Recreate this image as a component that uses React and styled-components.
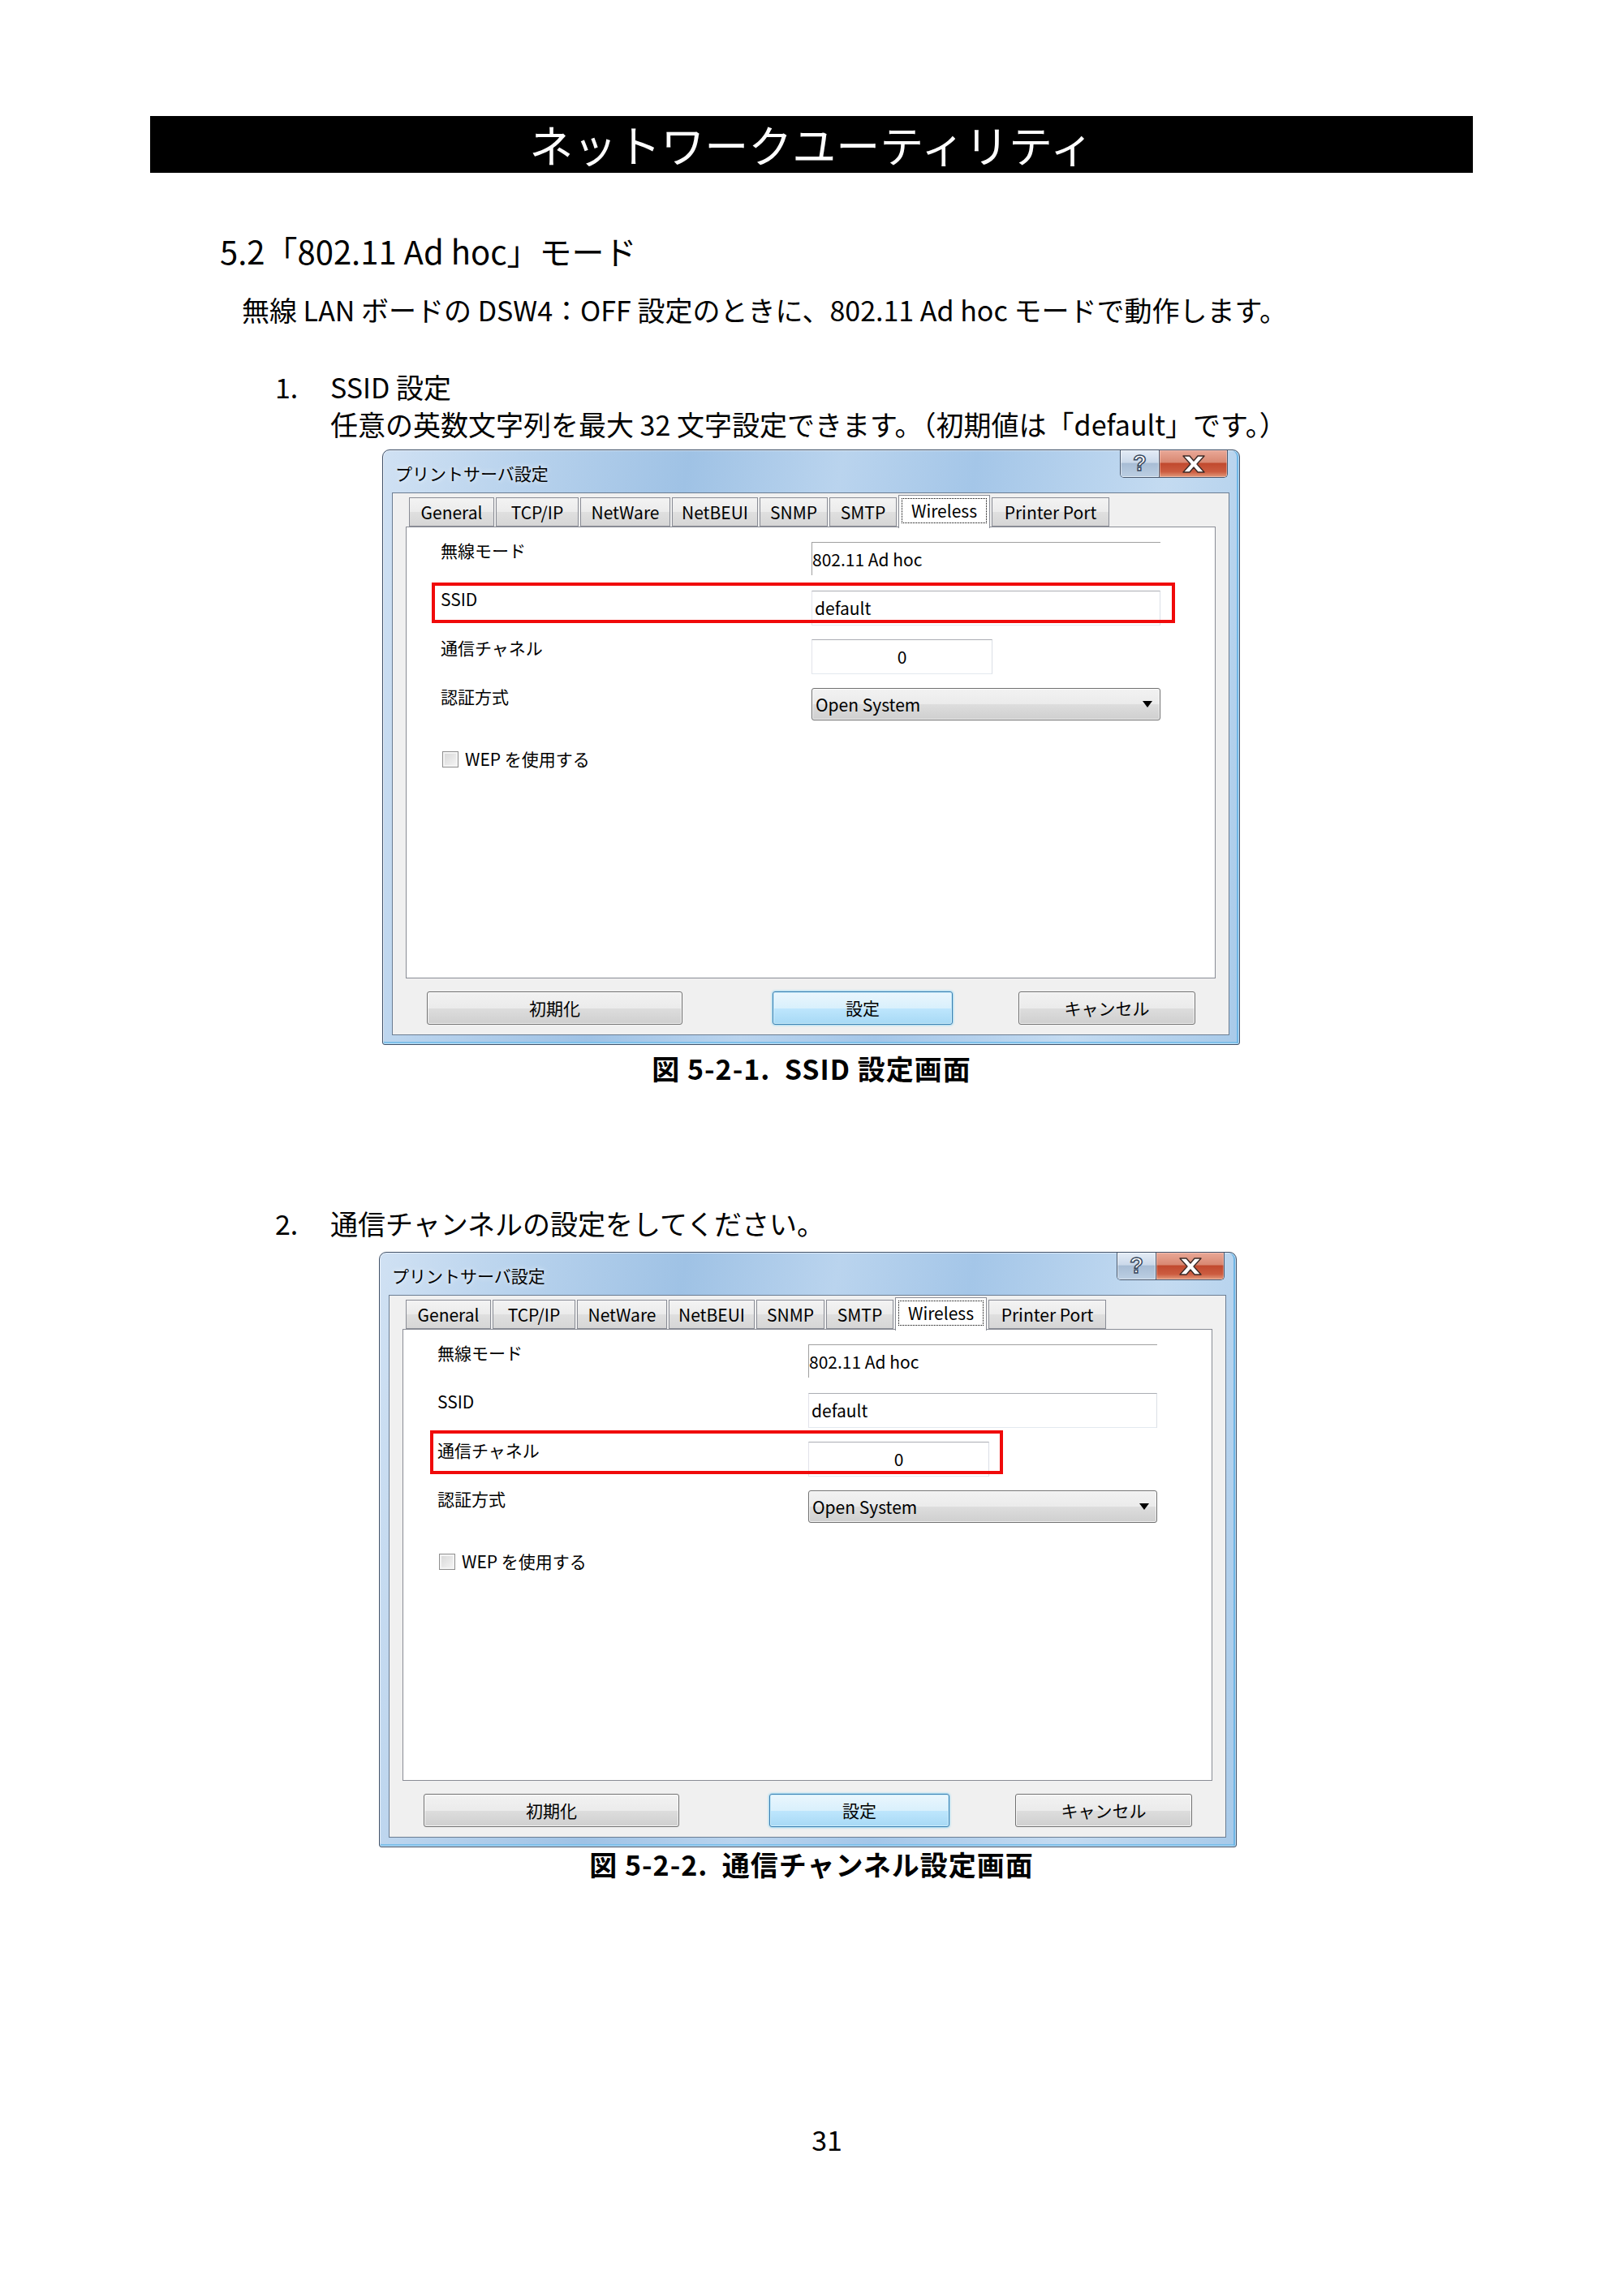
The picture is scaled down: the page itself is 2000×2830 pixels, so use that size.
import styled, { createGlobalStyle } from "styled-components"

const GlobalStyle = createGlobalStyle`
  html, body {
    margin: 0;
    padding: 0;
    background: #fff;
  }
  body {
    font-family: "Noto Sans CJK JP", "Noto Sans", sans-serif;
    color: #000;
  }
`

const Page = styled.div`
  width: 1630px;
  margin-left: 185px;
  padding-top: 143px;
  padding-bottom: 160px;
`

const ChapterBar = styled.div`
  height: 70px;
  background: #000;
  color: #fff;
  display: flex;
  align-items: center;
  justify-content: center;
  font-size: 54px;
  line-height: 1;
`

const SectionTitle = styled.h2`
  margin: 76px 0 0;
  padding-left: 86px;
  font-size: 40px;
  line-height: 40px;
  font-weight: 400;
`

const Paragraph = styled.p`
  margin: ${p => p.$top}px 0 0;
  padding-left: ${p => p.$indent}px;
  font-size: 34px;
  line-height: 34px;
  white-space: nowrap;
`

const Step = styled.div`
  display: flex;
  margin-top: ${p => p.$top}px;
  padding-left: 154px;
  font-size: 34px;
  line-height: 34px;
`

const StepNum = styled.span`
  width: 68px;
  flex: none;
`

const Caption = styled.div`
  margin-top: ${p => p.$top}px;
  text-align: center;
  font-size: 34px;
  line-height: 34px;
  font-weight: 700;
  letter-spacing: 1px;
`

const PageNo = styled.div`
  margin-top: 305px;
  padding-left: 38px;
  text-align: center;
  font-size: 34px;
  line-height: 34px;
`

/* ---- Vista style dialog ---- */

const Window = styled.div`
  box-sizing: border-box;
  width: 1057px;
  height: 734px;
  margin-top: ${p => p.$top}px;
  margin-left: ${p => p.$indent}px;
  padding: 0 12px 11px 11px;
  display: flex;
  flex-direction: column;
  border: 1px solid #3f5068;
  border-radius: 9px 9px 3px 3px;
  background: linear-gradient(100deg, #d0e1f3 0%, #b9d3ed 14%, #9fc2e5 32%, #bad4ee 48%, #a4c6e8 62%, #c4dbf1 82%, #a8cae9 100%);
  box-shadow: inset 0 0 0 1px rgba(255, 255, 255, 0.55), inset -3px 0 0 #6fb6e6, inset 0 -3px 0 #7fc0ea;
`

const WindowHead = styled.div`
  height: 52px;
  display: flex;
  align-items: flex-start;
  justify-content: space-between;
`

const WindowTitle = styled.div`
  margin: 18px 0 0 4px;
  font-size: 21px;
  line-height: 21px;
  text-shadow: 0 0 6px rgba(255, 255, 255, 0.9);
`

const CaptionButtons = styled.div`
  display: flex;
  height: 33px;
  margin-right: 2px;
  border: 1px solid #4a5a70;
  border-top: none;
  border-radius: 0 0 5px 5px;
  overflow: hidden;
`

const HelpButton = styled.div`
  width: 47px;
  display: flex;
  align-items: center;
  justify-content: center;
  border-right: 1px solid #4a5a70;
  background: linear-gradient(#e4ecf6, #cbd9ea 45%, #a8bdd5 50%, #bccfe3);
  box-shadow: inset 0 0 0 1px rgba(255, 255, 255, 0.5);
  color: #fff;
  font-family: "Liberation Sans", sans-serif;
  font-weight: 700;
  font-size: 27px;
  -webkit-text-stroke: 1.5px #3a4a60;
`

const CloseButton = styled.div`
  width: 83px;
  display: flex;
  align-items: center;
  justify-content: center;
  background: linear-gradient(#e9a897, #d98973 44%, #c14a2f 50%, #cc5c40 80%, #e29a7c);
  box-shadow: inset 0 0 0 1px rgba(255, 220, 210, 0.45);
`

const Client = styled.div`
  flex: 1;
  display: flex;
  flex-direction: column;
  padding: 2px 16px 0;
  background: #f0f0f0;
  border: 1px solid #6b7d92;
`

const TabStrip = styled.div`
  display: flex;
  align-items: flex-end;
  gap: 2px;
  height: 39px;
  padding-left: 4px;
`

const Tab = styled.div`
  box-sizing: border-box;
  position: relative;
  width: ${p => p.$w}px;
  height: ${p => (p.$active ? 41 : 36)}px;
  margin-bottom: ${p => (p.$active ? -2 : 0)}px;
  z-index: ${p => (p.$active ? 2 : 0)};
  display: flex;
  align-items: center;
  justify-content: center;
  padding: ${p => (p.$active ? "3px 3px 6px" : "0")};
  border: 1px solid #898c95;
  border-bottom: ${p => (p.$active ? "none" : "1px solid #898c95")};
  background: ${p => (p.$active ? "#fff" : "linear-gradient(#f3f3f3, #ebebeb 50%, #dfdfdf 51%, #d6d6d6)")};
  font-size: 21px;
  line-height: 1;
  white-space: nowrap;
`

const FocusRing = styled.span`
  flex: 1;
  align-self: stretch;
  display: flex;
  align-items: center;
  justify-content: center;
  border: 1px dotted #000;
`

const Panel = styled.div`
  position: relative;
  box-sizing: border-box;
  height: 557px;
  padding: 18px 0 0 42px;
  background: #fff;
  border: 1px solid #898c95;
`

const FieldRow = styled.div`
  position: relative;
  display: grid;
  grid-template-columns: 457px auto;
  height: 60px;
  align-items: start;
`

const Label = styled.div`
  font-size: 21px;
  line-height: 21px;
`

const StaticField = styled.div`
  box-sizing: border-box;
  width: 430px;
  height: 41px;
  border-top: 1px solid #a0a0a0;
  border-left: 1px solid #a0a0a0;
  font-size: 21px;
  line-height: 40px;
  white-space: nowrap;
`

const TextBox = styled.div`
  box-sizing: border-box;
  width: ${p => p.$w}px;
  height: 43px;
  padding: 0 3px;
  border: 1px solid;
  border-color: #abadb3 #dbdfe6 #e3e9ef #e2e3ea;
  font-size: 21px;
  line-height: 41px;
  text-align: ${p => p.$align || "left"};
`

const SelectBox = styled.div`
  box-sizing: border-box;
  width: 430px;
  height: 40px;
  padding: 0 9px 0 4px;
  display: flex;
  align-items: center;
  justify-content: space-between;
  border: 1px solid #707070;
  border-radius: 3px;
  background: linear-gradient(#f2f2f2, #ebebeb 50%, #dddddd 51%, #cfcfcf);
  box-shadow: inset 0 0 0 1px rgba(255, 255, 255, 0.7);
  font-size: 21px;
  line-height: 1;
`

const Highlight = styled.div`
  position: absolute;
  top: ${p => p.$top}px;
  left: ${p => p.$left}px;
  width: ${p => p.$w}px;
  height: ${p => p.$h}px;
  box-sizing: border-box;
  border: 4px solid #f00a0a;
  pointer-events: none;
`

const CheckRow = styled.div`
  display: flex;
  align-items: center;
  gap: 8px;
  margin: 17px 0 0 2px;
  font-size: 21px;
  line-height: 21px;
`

const CheckBox = styled.span`
  box-sizing: border-box;
  width: 20px;
  height: 20px;
  border: 1px solid #8f8f8f;
  background: linear-gradient(135deg, #d6d6d6, #f6f6f6);
  box-shadow: inset 0 0 0 2px #f4f4f4;
`

const ButtonRow = styled.div`
  display: flex;
  margin-top: 16px;
  padding-left: 26px;
`

const PushButton = styled.div`
  box-sizing: border-box;
  width: ${p => p.$w}px;
  height: 41px;
  margin-left: ${p => p.$ml || 0}px;
  display: flex;
  align-items: center;
  justify-content: center;
  border: 1px solid ${p => (p.$default ? "#3c7fb1" : "#707070")};
  border-radius: 3px;
  background: ${p =>
    p.$default
      ? "linear-gradient(#eaf6fd, #d9f0fc 50%, #bee6fd 51%, #a7d9f5)"
      : "linear-gradient(#f2f2f2, #ebebeb 50%, #dddddd 51%, #cfcfcf)"};
  box-shadow: ${p =>
    p.$default ? "inset 0 0 0 1px #cdeefc, 0 0 3px #45bdf0" : "inset 0 0 0 1px rgba(255, 255, 255, 0.75)"};
  font-size: 21px;
  line-height: 1;
`

const tabs = [
  { name: "General", w: 105 },
  { name: "TCP/IP", w: 102 },
  { name: "NetWare", w: 111 },
  { name: "NetBEUI", w: 106 },
  { name: "SNMP", w: 84 },
  { name: "SMTP", w: 83 },
  { name: "Wireless", w: 113, active: true },
  { name: "Printer Port", w: 145 },
]

function PrintServerDialog({ highlight, top, indent }) {
  return (
    <Window $top={top} $indent={indent}>
      <WindowHead>
        <WindowTitle>プリントサーバ設定</WindowTitle>
        <CaptionButtons>
          <HelpButton>?</HelpButton>
          <CloseButton>
            <svg width="30" height="22" viewBox="0 0 30 22">
              <path
                d="M2 1h8l5 6 5-6h8l-9 10 9 10h-8l-5-6-5 6H2l9-10z"
                fill="#fff"
                stroke="#3d2a26"
                strokeWidth="1.4"
                strokeLinejoin="round"
              />
            </svg>
          </CloseButton>
        </CaptionButtons>
      </WindowHead>
      <Client>
        <TabStrip>
          {tabs.map(t => (
            <Tab key={t.name} $w={t.w} $active={t.active}>
              {t.active ? <FocusRing>{t.name}</FocusRing> : t.name}
            </Tab>
          ))}
        </TabStrip>
        <Panel>
          <FieldRow>
            <Label>無線モード</Label>
            <StaticField>802.11 Ad hoc</StaticField>
          </FieldRow>
          <FieldRow>
            <Label>SSID</Label>
            <TextBox $w={430}>default</TextBox>
            {highlight === "ssid" && <Highlight $top={-10} $left={-11} $w={916} $h={50} />}
          </FieldRow>
          <FieldRow>
            <Label>通信チャネル</Label>
            <TextBox $w={223} $align="center">0</TextBox>
            {highlight === "channel" && <Highlight $top={-14} $left={-9} $w={706} $h={54} />}
          </FieldRow>
          <FieldRow>
            <Label>認証方式</Label>
            <SelectBox>
              <span>Open System</span>
              <svg width="12" height="8" viewBox="0 0 12 8">
                <path d="M0 0h12L6 8z" fill="#000" />
              </svg>
            </SelectBox>
          </FieldRow>
          <CheckRow>
            <CheckBox />
            <span>WEP を使用する</span>
          </CheckRow>
        </Panel>
        <ButtonRow>
          <PushButton $w={315}>初期化</PushButton>
          <PushButton $w={222} $ml={111} $default>
            設定
          </PushButton>
          <PushButton $w={218} $ml={81}>
            キャンセル
          </PushButton>
        </ButtonRow>
      </Client>
    </Window>
  )
}

export default function App() {
  return (
    <>
      <GlobalStyle />
      <Page>
        <ChapterBar>ネットワークユーティリティ</ChapterBar>
        <SectionTitle>5.2「802.11 Ad hoc」モード</SectionTitle>
        <Paragraph $top={36} $indent={113}>
          無線 LAN ボードの DSW4：OFF 設定のときに、802.11 Ad hoc モードで動作します。
        </Paragraph>

        <Step $top={61}>
          <StepNum>1.</StepNum>
          <span>SSID 設定</span>
        </Step>
        <Paragraph $top={12} $indent={222}>
          任意の英数文字列を最大 32 文字設定できます。（初期値は「default」です。）
        </Paragraph>
        <PrintServerDialog highlight="ssid" top={14} indent={286} />
        <Caption $top={12}>図 5-2-1.&nbsp; SSID 設定画面</Caption>

        <Step $top={157}>
          <StepNum>2.</StepNum>
          <span>通信チャンネルの設定をしてください。</span>
        </Step>
        <PrintServerDialog highlight="channel" top={18} indent={282} />
        <Caption $top={4}>図 5-2-2.&nbsp; 通信チャンネル設定画面</Caption>

        <PageNo>31</PageNo>
      </Page>
    </>
  )
}
